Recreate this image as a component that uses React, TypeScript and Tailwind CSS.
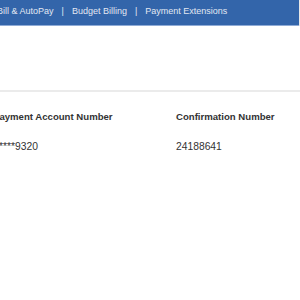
import React from 'react'

const navItems = ['Bill & AutoPay', 'Budget Billing', 'Payment Extensions']

export default function App() {
  return (
    <div className="w-[300px] h-[300px] bg-white overflow-hidden font-['Liberation_Sans',Arial,sans-serif] text-[#333]">
      <div className="flex w-full">
        <nav className="w-[299px] h-[26px] bg-[#3365aa] border-b border-[#8fabd6] flex items-center">
          <div className="-ml-[3px] flex items-center text-[9px] text-[#e2e8f2] whitespace-nowrap pb-[1px]">
            {navItems.map((item, i) => (
              <React.Fragment key={item}>
                {i > 0 && <span className="px-[8px]">|</span>}
                <span>{item}</span>
              </React.Fragment>
            ))}
          </div>
        </nav>
        <div className="flex-1 bg-[#e8e8e8]" />
      </div>

      <div className="mt-[64px] h-[2px] bg-[#ebebeb]" />

      <div className="-ml-[7px] mt-[18px] grid grid-cols-[183px_1fr] whitespace-nowrap">
        <div className="font-bold text-[9.6px]">Payment Account Number</div>
        <div className="font-bold text-[9.6px]">Confirmation Number</div>
        <div className="mt-[15px] -ml-[2px] text-[10.3px]">******9320</div>
        <div className="mt-[15px] text-[10.3px]">24188641</div>
      </div>
    </div>
  )
}
